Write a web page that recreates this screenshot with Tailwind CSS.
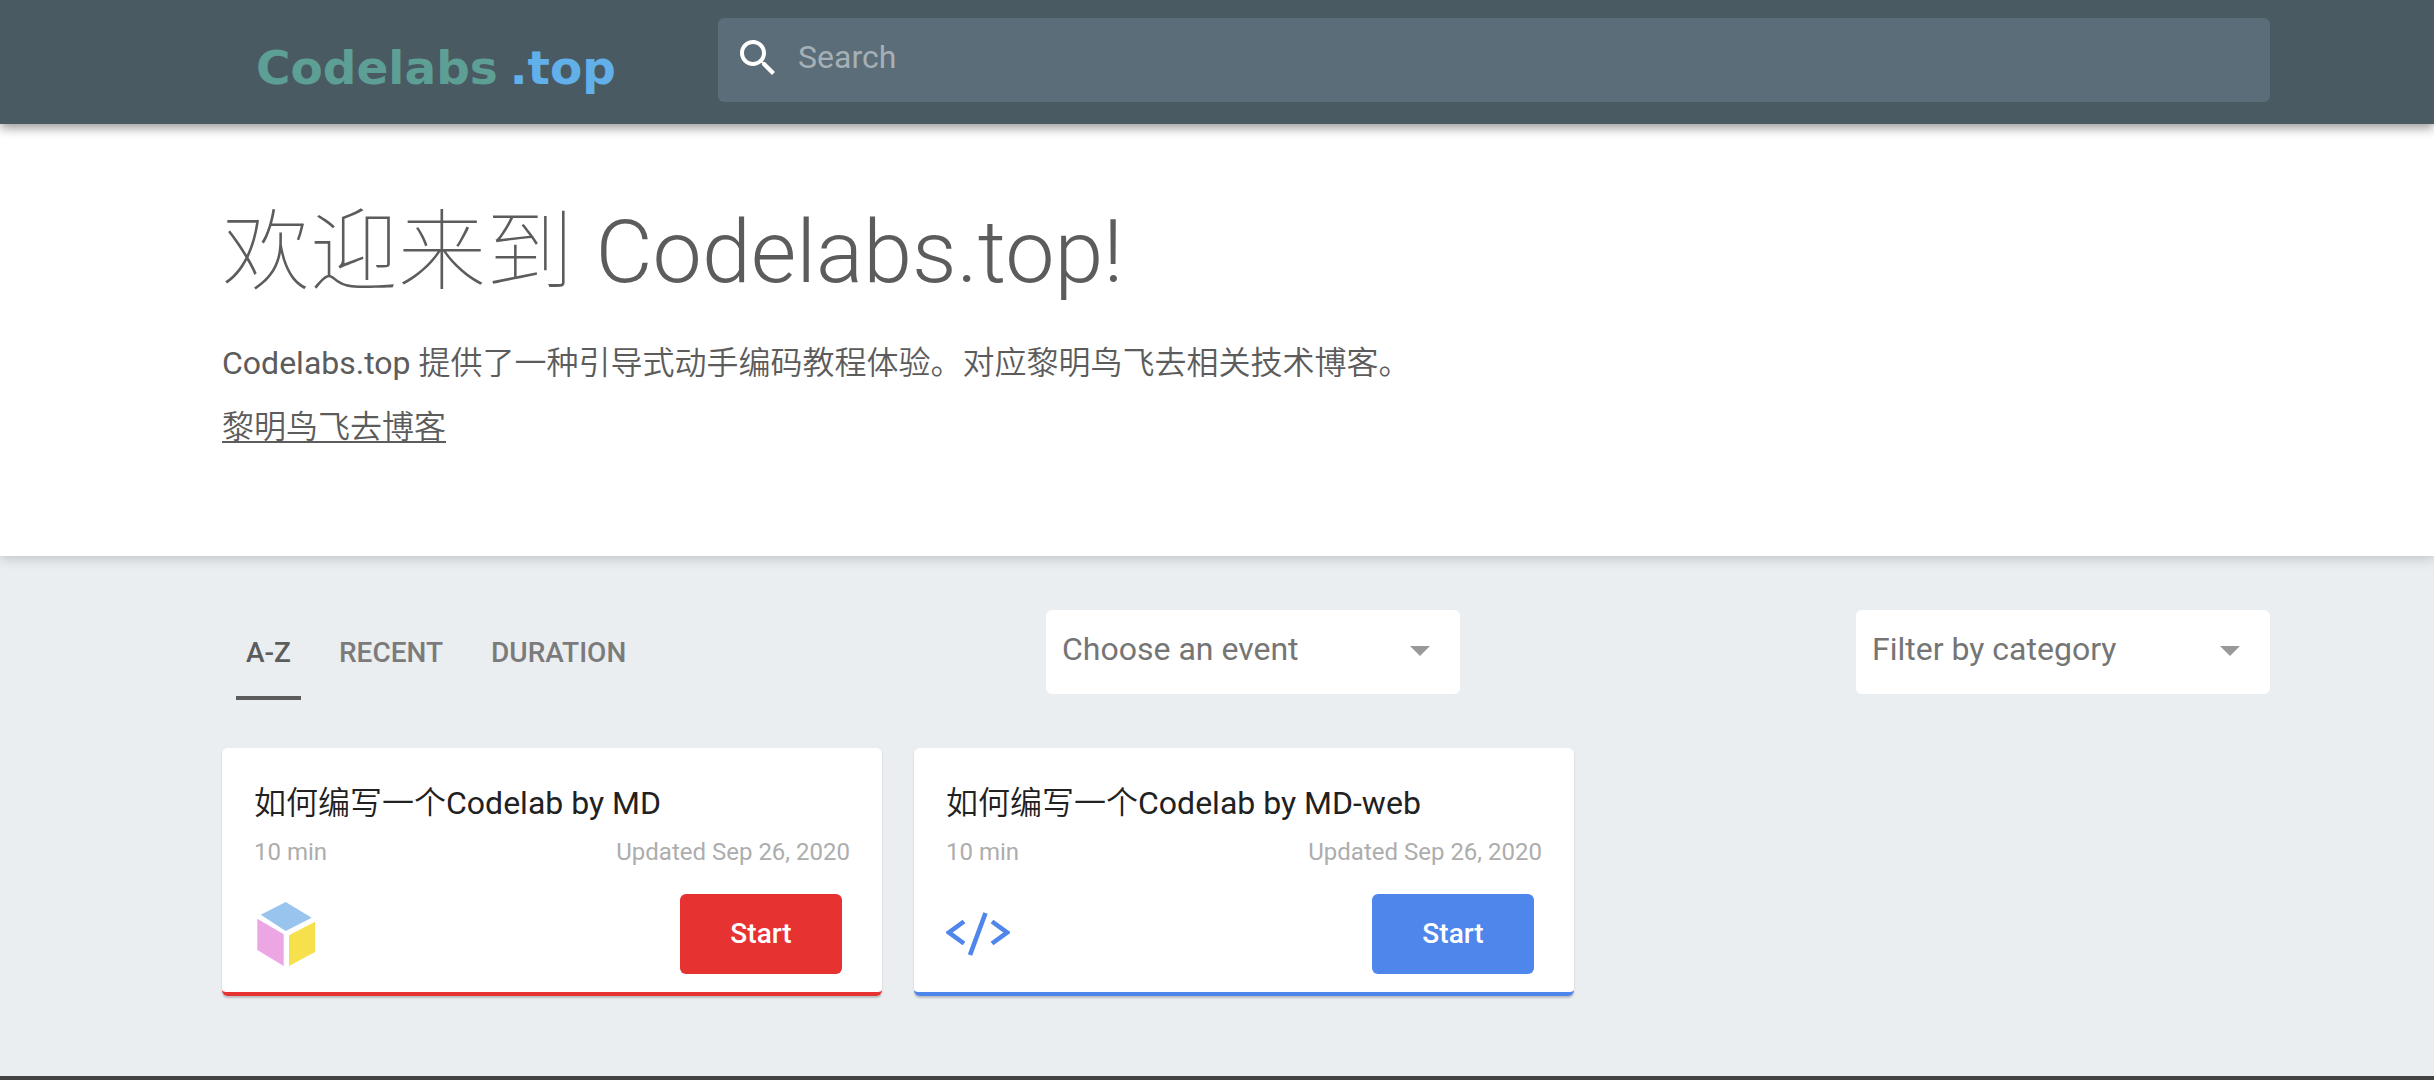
<!DOCTYPE html>
<html lang="zh-CN">
<head>
<meta charset="utf-8">
<meta name="viewport" content="width=device-width, initial-scale=1">
<title>Codelabs.top</title>
<script src="https://cdn.jsdelivr.net/npm/@tailwindcss/browser@4"></script>
</head>
<body class="flex min-h-screen flex-col bg-[#ebeef1] font-['Roboto','Noto_Sans_CJK_SC',sans-serif] text-[32px] leading-[40px] text-[#5c5c5c]">
  <header class="relative z-10 flex h-[124px] items-start bg-[#4a5a62] pt-[18px] pr-[164px] pl-[256px] shadow-[0_4px_10px_rgba(0,0,0,0.4)]">
    <a href="#" class="flex w-[462px] shrink-0 items-baseline gap-3 pt-[20px] font-['DejaVu_Sans',sans-serif] text-[47px] leading-[60px] font-bold">
      <span class="text-[#5e9f95]">Codelabs</span><span class="text-[#62b0ea]">.top</span>
    </a>
    <label class="flex h-[84px] flex-1 items-center rounded-md bg-[#5a6d78] pr-4 pb-1 pl-4">
      <svg class="mr-[16px] size-[48px] shrink-0 fill-white" viewBox="0 0 24 24" aria-hidden="true"><path d="M15.5 14h-.79l-.28-.27C15.41 12.59 16 11.11 16 9.5 16 5.91 13.09 3 9.5 3S3 5.91 3 9.5 5.91 16 9.5 16c1.61 0 3.09-.59 4.23-1.57l.27.28v.79l5 4.99L20.49 19l-4.99-5zm-6 0C7.01 14 5 11.99 5 9.5S7.01 5 9.5 5 14 7.01 14 9.5 11.99 14 9.5 14z"/></svg>
      <input type="search" placeholder="Search" aria-label="Search" class="min-w-0 flex-1 bg-transparent pb-[2px] text-white outline-none placeholder:text-[#a5b0b6]">
    </label>
  </header>

  <section class="relative bg-white pt-[70px] pr-[164px] pb-[97px] pl-[222px] shadow-[0_2px_12px_rgba(0,0,0,0.2)]">
    <h1 class="text-[88px] leading-[116px] font-light"><span class="font-thin">欢迎来到</span> Codelabs.top!</h1>
    <p class="mt-[21px] leading-[64px]">Codelabs.top <span class="font-[350]">提供了一种引导式动手编码教程体验。对应黎明鸟飞去相关技术博客。</span></p>
    <p class="leading-[64px]"><a href="#" class="font-[350] underline decoration-2 underline-offset-3">黎明鸟飞去博客</a></p>
  </section>

  <main class="flex-1 pt-[54px] pr-[164px] pb-[80px] pl-[222px]">
    <div class="flex items-start justify-between">
      <div role="tablist" class="flex w-[428px] gap-[28px] pl-[14px] text-[28px] font-medium whitespace-nowrap text-[#7b7b7b]">
        <button role="tab" aria-selected="true" class="h-[90px] border-b-4 border-[#5c5c5c] px-[10px] text-[#5c5c5c]">A-Z</button>
        <button role="tab" aria-selected="false" class="h-[90px] border-b-4 border-transparent px-[10px]">RECENT</button>
        <button role="tab" aria-selected="false" class="h-[90px] border-b-4 border-transparent px-[10px]">DURATION</button>
      </div>
      <div class="relative w-[414px]">
        <select aria-label="Choose an event" class="h-[84px] w-full appearance-none rounded-md bg-white px-4 pb-[6px] text-[#757575]"><option>Choose an event</option></select>
        <svg class="pointer-events-none absolute top-[36px] right-[30px] h-[10px] w-[20px] fill-[#999]" viewBox="0 0 20 10" aria-hidden="true"><path d="M0 0h20L10 10z"/></svg>
      </div>
      <div class="relative w-[414px]">
        <select aria-label="Filter by category" class="h-[84px] w-full appearance-none rounded-md bg-white px-4 pb-[6px] text-[#757575]"><option>Filter by category</option></select>
        <svg class="pointer-events-none absolute top-[36px] right-[30px] h-[10px] w-[20px] fill-[#999]" viewBox="0 0 20 10" aria-hidden="true"><path d="M0 0h20L10 10z"/></svg>
      </div>
    </div>

    <div class="mt-[48px] grid grid-cols-3 gap-[32px] pr-1">
      <article class="rounded-md border-b-4 border-[#e73232] bg-white px-8 pt-[35px] pb-[18px] shadow-[0_2px_2px_rgba(0,0,0,0.2)]">
        <h2 class="text-[#212121]"><span class="font-[350]">如何编写一个</span>Codelab by MD</h2>
        <div class="mt-[11px] flex justify-between text-[24px] leading-[36px] text-[#adadad]"><span>10 min</span><span>Updated Sep 26, 2020</span></div>
        <div class="mt-[24px] flex items-center justify-between pr-2">
          <svg class="size-[64px]" viewBox="0 0 64 64" aria-hidden="true"><path fill="#99c4ee" d="M31.7 0l26 15.7-26 13.3-25-16.3z"/><path fill="#eca6e4" d="M3.3 16.7l26.4 15.6V64L3.3 48z"/><path fill="#f6e04b" d="M61 19.7V50L35 64V33.3z"/></svg>
          <button class="h-[80px] w-[162px] rounded-md bg-[#e73232] text-[28px] font-medium text-white">Start</button>
        </div>
      </article>
      <article class="rounded-md border-b-4 border-[#4e86ec] bg-white px-8 pt-[35px] pb-[18px] shadow-[0_2px_2px_rgba(0,0,0,0.2)]">
        <h2 class="text-[#212121]"><span class="font-[350]">如何编写一个</span>Codelab by MD-web</h2>
        <div class="mt-[11px] flex justify-between text-[24px] leading-[36px] text-[#adadad]"><span>10 min</span><span>Updated Sep 26, 2020</span></div>
        <div class="mt-[24px] flex items-center justify-between pr-2">
          <svg class="size-[64px]" viewBox="0 0 64 64" fill="none" stroke="#4e86ec" stroke-width="4.6" aria-hidden="true"><path d="M18 19.5L3 30.5l15 11M46 19.5l15 11-15 11M39.5 11L24 53"/></svg>
          <button class="h-[80px] w-[162px] rounded-md bg-[#4e86ec] text-[28px] font-medium text-white">Start</button>
        </div>
      </article>
    </div>
  </main>
  <footer class="h-1 bg-[#424242]"></footer>
</body>
</html>
